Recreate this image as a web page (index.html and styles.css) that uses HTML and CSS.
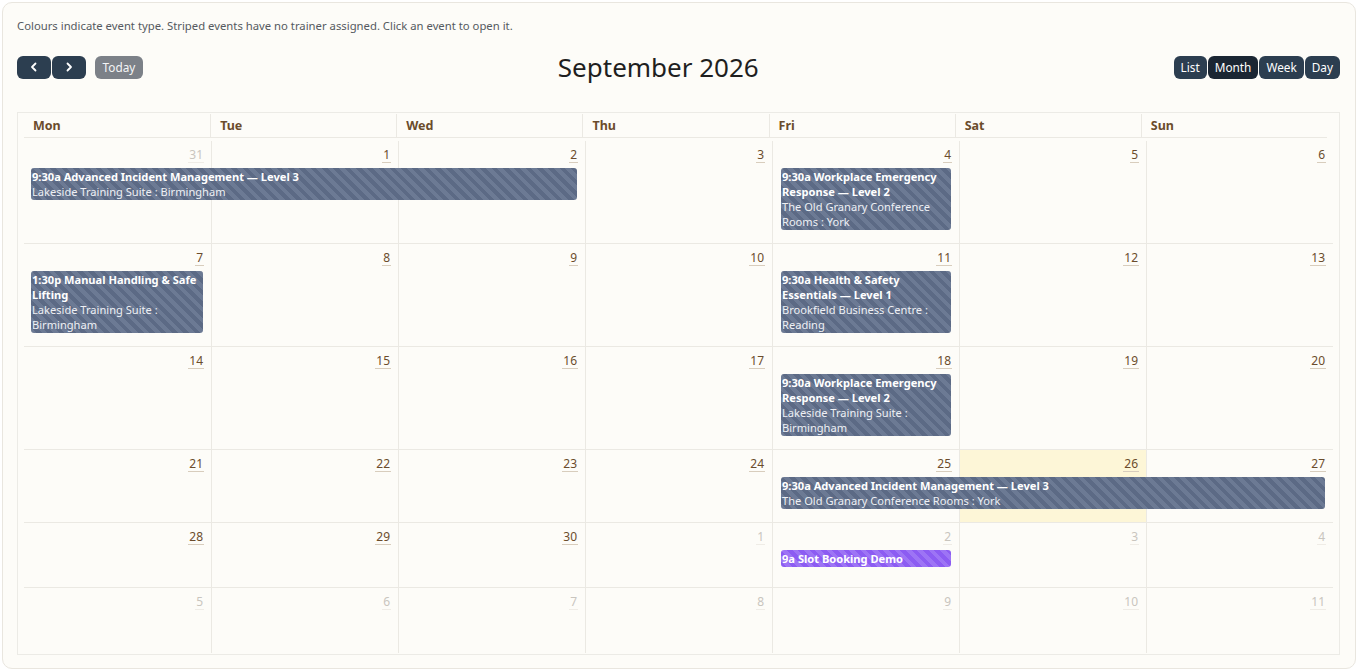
FILE: index.html
```html
<!DOCTYPE html>
<html>
<head>
<meta charset="utf-8">
<link rel="stylesheet" href="styles.css">
</head>
<body>
<div class="card">
  <p class="note">Colours indicate event type. Striped events have no trainer assigned. Click an event to open it.</p>
  <div class="toolbar">
    <div class="tb-left">
      <div class="group">
        <button class="btn icon-btn"><svg width="12" height="12" viewBox="0 0 12 12"><path d="M7.5 2.5 4 6l3.5 3.5" fill="none" stroke="#fff" stroke-width="1.8" stroke-linecap="round" stroke-linejoin="round"/></svg></button>
        <button class="btn icon-btn"><svg width="12" height="12" viewBox="0 0 12 12"><path d="M4.5 2.5 8 6l-3.5 3.5" fill="none" stroke="#fff" stroke-width="1.8" stroke-linecap="round" stroke-linejoin="round"/></svg></button>
      </div>
      <button class="btn today">Today</button>
    </div>
    <h2 class="title">September 2026</h2>
    <div class="tb-right">
      <button class="btn">List</button>
      <button class="btn active">Month</button>
      <button class="btn">Week</button>
      <button class="btn">Day</button>
    </div>
  </div>

  <div class="cal">
    <div class="head">
      <div class="hcell">Mon</div><div class="hcell">Tue</div><div class="hcell">Wed</div><div class="hcell">Thu</div><div class="hcell">Fri</div><div class="hcell">Sat</div><div class="hcell">Sun</div>
    </div>
    <div class="body">
      <div class="week tall">
        <div class="day c1"><span class="num other">31</span></div>
        <div class="day c2"><span class="num">1</span></div>
        <div class="day c3"><span class="num">2</span></div>
        <div class="day c4"><span class="num">3</span></div>
        <div class="day c5"><span class="num">4</span></div>
        <div class="day c6"><span class="num">5</span></div>
        <div class="day c7"><span class="num">6</span></div>
        <div class="ev slate s1-3"><b>9:30a Advanced Incident Management — Level 3</b><span>Lakeside Training Suite : Birmingham</span></div>
        <div class="ev slate s5"><b>9:30a Workplace Emergency Response — Level 2</b><span>The Old Granary Conference Rooms : York</span></div>
      </div>
      <div class="week tall">
        <div class="day c1"><span class="num">7</span></div>
        <div class="day c2"><span class="num">8</span></div>
        <div class="day c3"><span class="num">9</span></div>
        <div class="day c4"><span class="num">10</span></div>
        <div class="day c5"><span class="num">11</span></div>
        <div class="day c6"><span class="num">12</span></div>
        <div class="day c7"><span class="num">13</span></div>
        <div class="ev slate s1"><b>1:30p Manual Handling &amp; Safe Lifting</b><span>Lakeside Training Suite : Birmingham</span></div>
        <div class="ev slate s5"><b>9:30a Health &amp; Safety Essentials — Level 1</b><span>Brookfield Business Centre : Reading</span></div>
      </div>
      <div class="week tall">
        <div class="day c1"><span class="num">14</span></div>
        <div class="day c2"><span class="num">15</span></div>
        <div class="day c3"><span class="num">16</span></div>
        <div class="day c4"><span class="num">17</span></div>
        <div class="day c5"><span class="num">18</span></div>
        <div class="day c6"><span class="num">19</span></div>
        <div class="day c7"><span class="num">20</span></div>
        <div class="ev slate s5"><b>9:30a Workplace Emergency Response — Level 2</b><span>Lakeside Training Suite : Birmingham</span></div>
      </div>
      <div class="week mid">
        <div class="day c1"><span class="num">21</span></div>
        <div class="day c2"><span class="num">22</span></div>
        <div class="day c3"><span class="num">23</span></div>
        <div class="day c4"><span class="num">24</span></div>
        <div class="day c5"><span class="num">25</span></div>
        <div class="day c6 today-cell"><span class="num">26</span></div>
        <div class="day c7"><span class="num">27</span></div>
        <div class="ev slate s5-7"><b>9:30a Advanced Incident Management — Level 3</b><span>The Old Granary Conference Rooms : York</span></div>
      </div>
      <div class="week short">
        <div class="day c1"><span class="num">28</span></div>
        <div class="day c2"><span class="num">29</span></div>
        <div class="day c3"><span class="num">30</span></div>
        <div class="day c4"><span class="num other">1</span></div>
        <div class="day c5"><span class="num other">2</span></div>
        <div class="day c6"><span class="num other">3</span></div>
        <div class="day c7"><span class="num other">4</span></div>
        <div class="ev purple s5"><b>9a Slot Booking Demo</b></div>
      </div>
      <div class="week short last">
        <div class="day c1"><span class="num other">5</span></div>
        <div class="day c2"><span class="num other">6</span></div>
        <div class="day c3"><span class="num other">7</span></div>
        <div class="day c4"><span class="num other">8</span></div>
        <div class="day c5"><span class="num other">9</span></div>
        <div class="day c6"><span class="num other">10</span></div>
        <div class="day c7"><span class="num other">11</span></div>
      </div>
    </div>
  </div>
</div>
</body>
</html>
```

FILE: styles.css
```css
* { box-sizing: border-box; }
html, body { margin: 0; padding: 0; background: #ffffff; }
body {
  font-family: "Segoe UI", "Noto Sans", "Open Sans", sans-serif;
  color: #222;
  padding: 2px;
}
.card {
  height: 667px;
  background: #fdfcf8;
  border: 1px solid #e9e6df;
  border-radius: 10px;
  padding: 14px 15px 0 14px;
}
.note {
  margin: 0;
  font-size: 11.3px;
  line-height: 18px;
  color: #555a60;
}
.toolbar {
  margin-top: 19px;
  display: flex;
  align-items: center;
  justify-content: space-between;
  height: 26px;
}
.tb-left, .tb-right, .group { display: flex; align-items: center; }
.tb-left { gap: 9px; }
.tb-right { gap: 1px; }
.group { gap: 1px; }
.btn {
  font-family: inherit;
  font-size: 11.8px;
  line-height: 16px;
  color: #fff;
  background: #2c3e50;
  border: none;
  border-radius: 6px;
  height: 23px;
  padding: 0 7px;
  cursor: pointer;
}
.icon-btn { width: 34px; display: flex; align-items: center; justify-content: center; padding: 0; }
.today { background: #7c8188; color: #f4f5f6; width: 48px; padding: 0; }
.btn.active { background: #1b2633; }
.title {
  margin: 0;
  font-weight: 400;
  font-size: 26px;
  line-height: 30px;
  color: #1f1f1f;
}
.cal {
  margin-top: 32px;
  border: 1px solid #ecebe6;
  padding: 1px 6px 1px 6px;
}
.head {
  display: grid;
  grid-template-columns: repeat(7, 1fr);
  margin-right: 6px;
  border-bottom: 1px solid #ebe9e3;
  height: 24px;
}
.hcell {
  font-size: 12.5px;
  font-weight: 700;
  color: #6b4c2c;
  padding: 3px 9px 0;
  border-left: 1px solid #ebe9e3;
}
.hcell:first-child { border-left: none; }
.body { margin-top: 3px; }
.week {
  display: grid;
  grid-template-columns: repeat(7, 1fr);
  grid-template-rows: 27px auto auto 1fr;
  border-bottom: 1px solid #ebe9e3;
}
.week.last { border-bottom: none; }
.week.tall { height: 103px; }
.week.mid { height: 73px; }
.week.short { height: 65px; }
.day {
  grid-row: 1 / -1;
  border-left: 1px solid #ebe9e3;
  text-align: right;
  padding: 1px 7px 0 0;
}
.day.c1 { border-left: none; grid-column: 1; }
.c2 { grid-column: 2; } .c3 { grid-column: 3; } .c4 { grid-column: 4; }
.c5 { grid-column: 5; } .c6 { grid-column: 6; } .c7 { grid-column: 7; }
.today-cell { background: #fdf6d7; }
.num {
  font-size: 12px;
  line-height: 15px;
  color: #6b4c2c;
  border-bottom: 1px solid #d8cdbd;
  display: inline-block;
  padding: 0 1px;
}
.num.other { color: #c9c5be; border-bottom-color: #efece6; }
.ev {
  grid-row: 2;
  position: relative;
  z-index: 1;
  margin: 0 8px 0 7px;
  border-radius: 3px;
  padding: 1px;
  font-size: 11.1px;
  line-height: 15px;
  color: #fff;
  display: flex;
  flex-direction: column;
  align-self: start;
}
.ev b { font-weight: 700; }
.ev span { color: #eef0f4; }
.slate {
  background: repeating-linear-gradient(45deg, #6c7a94 0 4px, #5c6a85 4px 8px);
}
.purple {
  background: repeating-linear-gradient(45deg, #8c5cf2 0 4px, #9d74f5 4px 8px);
}
.s1 { grid-column: 1; }
.s5 { grid-column: 5; margin-left: 9px; }
.s1-3 { grid-column: 1 / 4; }
.s5-7 { grid-column: 5 / 8; margin-left: 9px; }
```
